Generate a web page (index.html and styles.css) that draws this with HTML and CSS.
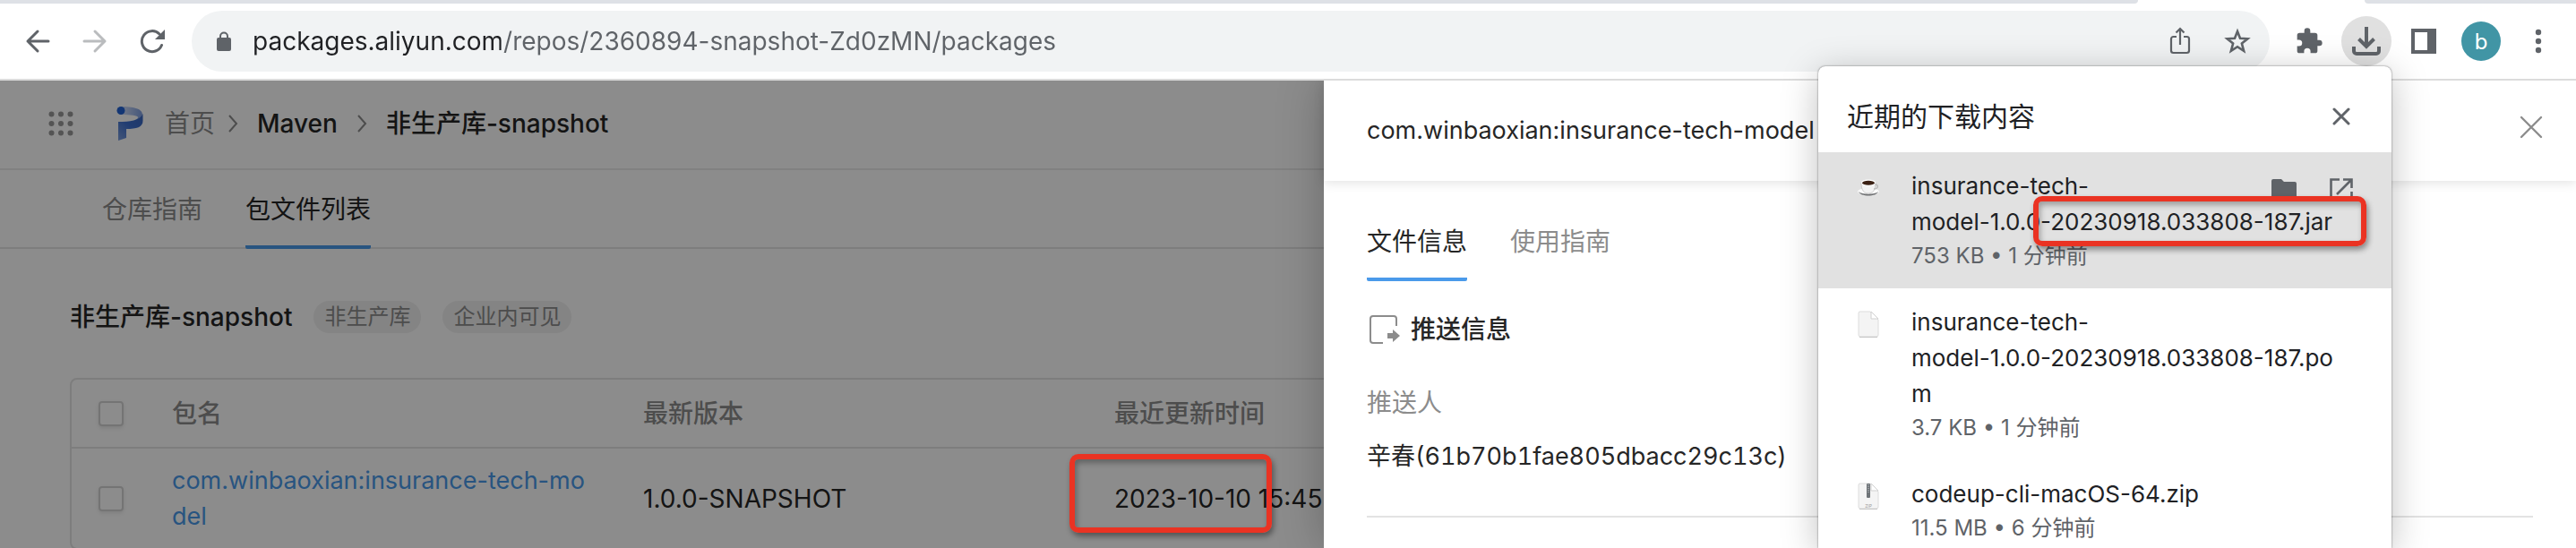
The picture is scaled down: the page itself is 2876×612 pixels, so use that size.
FILE: index.html
```html
<!DOCTYPE html>
<html lang="zh-CN">

<head>
    <meta charset="utf-8">
    <title>非生产库-snapshot</title>
    <meta name="viewport" content="width=device-width,initial-scale=1">
    <link rel="stylesheet" href="styles.css">
</head>

<body>
    <div class="tabstrip">
        <div class="tabstrip-left"></div>
        <div class="tabstrip-right"></div>
    </div>

    <div class="toolbar">
        <button class="tool" aria-label="back">
            <svg width="28" height="28" viewBox="0 0 28 28"><path d="M14 3L3 14l11 11M3 14h23" fill="none" stroke="#5f6368" stroke-width="3" stroke-linecap="round" stroke-linejoin="round"/></svg>
        </button>
        <button class="tool" aria-label="forward" disabled>
            <svg width="28" height="28" viewBox="0 0 28 28"><path d="M14 3l11 11-11 11M25 14H2" fill="none" stroke="#babcbe" stroke-width="3" stroke-linecap="round" stroke-linejoin="round"/></svg>
        </button>
        <button class="tool" aria-label="reload">
            <svg width="28" height="28" viewBox="0 0 28 28"><path d="M24.500 18.500A11.500 11.500 0 1 1 22 6" fill="none" stroke="#5f6368" stroke-width="3" stroke-linecap="round"/><path d="M28 1v11H17z" fill="#5f6368"/></svg>
        </button>

        <div class="omnibox">
            <svg width="16" height="22" viewBox="0 0 16 22"><path d="M4 9V5.500a4 4 0 0 1 8 0V9" fill="none" stroke="#5f6368" stroke-width="2"/><rect y="7" width="16" height="15" rx="2" fill="#5f6368"/></svg>
            <input class="url" type="text" aria-label="url" value="packages.aliyun.com/repos/2360894-snapshot-Zd0zMN/packages">
            <button class="tool" aria-label="share">
                <svg width="24" height="32" viewBox="0 0 24 32"><path d="M8 11H4.500A2.500 2.500 0 0 0 2 13.500v13A2.500 2.500 0 0 0 4.500 29h15a2.500 2.500 0 0 0 2.500-2.500v-13a2.500 2.500 0 0 0-2.500-2.500H16M12 20V2M7.500 6.500L12 2l4.500 4.500" fill="none" stroke="#5f6368" stroke-width="2.200"/></svg>
            </button>
            <button class="tool" aria-label="bookmark">
                <svg width="30" height="30" viewBox="0 0 30 30"><path d="M15 4l3 7.800 8.400.500-6.500 5.300 2.200 8.200L15 21.200l-7.100 4.600 2.200-8.200-6.500-5.300 8.400-.500z" fill="none" stroke="#5f6368" stroke-width="2.600"/></svg>
            </button>
        </div>

        <button class="tool" aria-label="extensions">
            <svg width="32" height="32" viewBox="0 0 24 24"><path d="M20.500 11H19V7a2 2 0 0 0-2-2h-4V3.500a2.500 2.500 0 0 0-5 0V5H4a2 2 0 0 0-2 2v3.800h1.500a2.700 2.700 0 0 1 0 5.400H2V20a2 2 0 0 0 2 2h3.800v-1.500a2.700 2.700 0 0 1 5.400 0V22H17a2 2 0 0 0 2-2v-4h1.500a2.500 2.500 0 0 0 0-5z" fill="#5f6368"/></svg>
        </button>
        <button class="tool tool-active" aria-label="downloads">
            <svg width="32" height="32" viewBox="0 0 32 32"><path d="M16 0v22M7.500 13.500L16 22l8.500-8.500" fill="none" stroke="#5f6368" stroke-width="4"/><path d="M2 22v5a3 3 0 0 0 3 3h22a3 3 0 0 0 3-3v-5" fill="none" stroke="#5f6368" stroke-width="4"/></svg>
        </button>
        <button class="tool" aria-label="side panel">
            <svg width="28" height="28" viewBox="0 0 28 28"><path d="M0 0h28v28H0zM4 4v20h14V4z" fill="#5f6368" fill-rule="evenodd"/></svg>
        </button>
        <button class="avatar">b</button>
        <button class="tool" aria-label="menu">
            <svg width="8" height="28" viewBox="0 0 8 28" fill="#5f6368"><circle cx="4" cy="4" r="3.200"/><circle cx="4" cy="14" r="3.200"/><circle cx="4" cy="24" r="3.200"/></svg>
        </button>
    </div>

    <div class="viewport">
        <div class="page">
            <header class="page-header">
                <svg class="apps" width="28" height="28" viewBox="0 0 28 28" fill="#999"><circle cx="3.500" cy="3.500" r="3"/><circle cx="14" cy="3.500" r="3"/><circle cx="24.500" cy="3.500" r="3"/><circle cx="3.500" cy="14" r="3"/><circle cx="14" cy="14" r="3"/><circle cx="24.500" cy="14" r="3"/><circle cx="3.500" cy="24.500" r="3"/><circle cx="14" cy="24.500" r="3"/><circle cx="24.500" cy="24.500" r="3"/></svg>
                <svg class="logo" width="30" height="38" viewBox="0 0 30 38">
                    <defs>
                        <linearGradient id="g1" x1="0" x2="1"><stop offset="0" stop-color="#d6e0f7"/><stop offset="1" stop-color="#7c9de0"/></linearGradient>
                        <linearGradient id="g2" x1="1" y1="0" x2="0" y2="1"><stop offset="0" stop-color="#3a66bd"/><stop offset=".500" stop-color="#3c6fcf"/><stop offset="1" stop-color="#7c9ddc"/></linearGradient>
                    </defs>
                    <path d="M5 0c13 0 24 2 24 9-1 4-5 6-12 8 5-2 7-3.500 7-5 0-2-8-3-19-3z" fill="url(#g1)"/>
                    <path d="M2 17c13 0 24-1 27.500-9v8c0 7-7 9-18.500 9v10l-9 3z" fill="url(#g2)"/>
                    <circle cx="5" cy="4.500" r="4.500" fill="#2463d4"/>
                </svg>
                <nav class="crumbs">
                    <a class="muted" href="#">首页</a>
                    <svg width="12" height="20" viewBox="0 0 12 20"><path d="M2 1l8 9-8 9" fill="none" stroke="#8c8c8c" stroke-width="2"/></svg>
                    <a href="#">Maven</a>
                    <svg width="12" height="20" viewBox="0 0 12 20"><path d="M2 1l8 9-8 9" fill="none" stroke="#8c8c8c" stroke-width="2"/></svg>
                    <a class="current" href="#">非生产库-snapshot</a>
                </nav>
            </header>

            <nav class="tabs page-tabs">
                <a href="#">仓库指南</a>
                <a class="active" href="#">包文件列表</a>
            </nav>

            <main class="content">
                <div class="repo-title">
                    <h1>非生产库-snapshot</h1>
                    <span class="badge">非生产库</span>
                    <span class="badge">企业内可见</span>
                </div>
                <div class="table-box">
                    <table>
                        <colgroup><col class="col-check"><col class="col-name"><col class="col-version"><col></colgroup>
                        <thead>
                            <tr>
                                <th><input type="checkbox" aria-label="全选"></th>
                                <th>包名</th>
                                <th>最新版本</th>
                                <th>最近更新时间</th>
                            </tr>
                        </thead>
                        <tbody>
                            <tr>
                                <td><input type="checkbox" aria-label="选择"></td>
                                <td class="name"><a href="#">com.winbaoxian:insurance-tech-model</a></td>
                                <td>1.0.0-SNAPSHOT</td>
                                <td>2023-10-10 15:45</td>
                            </tr>
                        </tbody>
                    </table>
                </div>
            </main>
        </div>

        <div class="mask"></div>
        <div class="mark mark-date"></div>

        <aside class="drawer">
            <div class="drawer-header">
                <h2>com.winbaoxian:insurance-tech-model</h2>
                <button class="plain" aria-label="关闭">
                    <svg width="26" height="26" viewBox="0 0 26 26"><path d="M2 2l22 22M24 2L2 24" stroke="#8c8c8c" stroke-width="2.400" stroke-linecap="round"/></svg>
                </button>
            </div>
            <div class="drawer-body">
                <nav class="tabs">
                    <a class="active" href="#">文件信息</a>
                    <a href="#">使用指南</a>
                </nav>
                <section class="push">
                    <h3>
                        <svg width="34" height="32" viewBox="0 0 34 32"><path d="M30 12V4a3 3 0 0 0-3-3H4a3 3 0 0 0-3 3v24a3 3 0 0 0 3 3h11" fill="none" stroke="#8c8c8c" stroke-width="2"/><path d="M20 20h6v-4l8 7-8 7v-4h-6z" fill="#8c8c8c"/></svg>
                        推送信息
                    </h3>
                    <dl>
                        <dt>推送人</dt>
                        <dd>辛春(61b70b1fae805dbacc29c13c)</dd>
                    </dl>
                </section>
            </div>
        </aside>
    </div>

    <div class="downloads">
        <div class="downloads-header">
            <h2>近期的下载内容</h2>
            <button class="plain" aria-label="关闭">
                <svg width="20" height="20" viewBox="0 0 20 20"><path d="M2 2l16 16M18 2L2 18" stroke="#5f6368" stroke-width="3" stroke-linecap="round"/></svg>
            </button>
        </div>
        <ul>
            <li class="hover">
                <svg class="file-icon" width="24" height="28" viewBox="0 0 24 28">
                    <ellipse cx="12" cy="19" rx="12" ry="4" fill="#fafafa"/>
                    <path d="M1 19c2 6 20 6 22 0-3 3.500-19 3.500-22 0z" fill="#6f7173"/>
                    <path d="M4 9h16c0 5-1 12-8 12S4 14 4 9z" fill="#f2f2f2" stroke="#b5b5b5" stroke-width=".600"/>
                    <path d="M19.500 11c4 0 4 5-1.500 5" fill="none" stroke="#bbb" stroke-width="1.500"/>
                    <ellipse cx="12" cy="9" rx="8" ry="3.400" fill="#fff"/>
                    <ellipse cx="12" cy="9.200" rx="6.800" ry="2.500" fill="#3b2114"/>
                </svg>
                <div class="file-text">
                    <p class="file-name">insurance-tech-<br>model-1.0.0-20230918.033808-187.jar</p>
                    <p class="file-meta">753 KB • 1 分钟前</p>
                </div>
                <div class="file-actions">
                    <button class="plain" aria-label="在文件夹中显示">
                        <svg width="28" height="24" viewBox="0 0 28 24"><path d="M2 0h9l3 3h12a2 2 0 0 1 2 2v17a2 2 0 0 1-2 2H2a2 2 0 0 1-2-2V2a2 2 0 0 1 2-2z" fill="#5f6368"/></svg>
                    </button>
                    <button class="plain" aria-label="打开">
                        <svg width="26" height="26" viewBox="0 0 26 26"><path d="M11 1.500H1.500v23h23V15M15 1.500h9.500V11M24.500 1.500L8 18" fill="none" stroke="#5f6368" stroke-width="2.600"/></svg>
                    </button>
                </div>
                <div class="mark mark-file"></div>
            </li>
            <li>
                <svg class="file-icon" width="24" height="30" viewBox="0 0 24 30"><path d="M2 1h12l9 9v17a2 2 0 0 1-2 2H3a2 2 0 0 1-2-2V2z" fill="#f4f4f4" stroke="#dcdcdc"/><path d="M15 1v8h8z" fill="#fff" stroke="#d0d0d0"/><path d="M2 29.500h20" stroke="#c4c4c4"/></svg>
                <div class="file-text">
                    <p class="file-name">insurance-tech-<br>model-1.0.0-20230918.033808-187.pom</p>
                    <p class="file-meta">3.7 KB • 1 分钟前</p>
                </div>
            </li>
            <li>
                <svg class="file-icon" width="24" height="30" viewBox="0 0 24 30"><path d="M2 1h12l9 9v17a2 2 0 0 1-2 2H3a2 2 0 0 1-2-2V2z" fill="#f4f4f4" stroke="#dcdcdc"/><path d="M15 1v8h8z" fill="#fff" stroke="#d0d0d0"/><path d="M2 29.500h20" stroke="#c4c4c4"/><rect x="10" y="1" width="4" height="16" rx="1" fill="#6f7478"/><path d="M12 2v9" stroke="#c8ccd0" stroke-dasharray="1 1"/><text x="12" y="28" font-size="5" text-anchor="middle" fill="#999">ZIP</text></svg>
                <div class="file-text">
                    <p class="file-name">codeup-cli-macOS-64.zip</p>
                    <p class="file-meta">11.5 MB • 6 分钟前</p>
                </div>
            </li>
        </ul>
    </div>
</body>

</html>
```
FILE: styles.css
```css
* {
    box-sizing: border-box;
}
html, body {
    height: 100%;
    margin: 0;
}
body {
    position: relative;
    display: flex;
    flex-direction: column;
    overflow: hidden;
    background: #fff;
    color: #262626;
    font-family: Inter, "Noto Sans CJK SC", sans-serif;
    font-size: 28px;
    line-height: 40px;
}
h1, h2, h3, p, ul, dl, dd {
    margin: 0;
    padding: 0;
    font-size: 28px;
    font-weight: 400;
}
ul {
    list-style: none;
}
a {
    color: inherit;
    text-decoration: none;
}
button {
    padding: 0;
    border: 0;
    background: none;
    font-family: inherit;
}
svg {
    display: block;
    flex: none;
}

/* browser chrome */
.tabstrip {
    display: flex;
    justify-content: space-between;
    flex: none;
    height: 4px;
}
.tabstrip-left, .tabstrip-right {
    background: #dee1e6;
}
.tabstrip-left {
    width: 83%;
    border-bottom-right-radius: 12px;
}
.tabstrip-right {
    width: 236px;
    border-bottom-left-radius: 12px;
}
.toolbar {
    display: flex;
    align-items: center;
    flex: none;
    gap: 16px;
    height: 86px;
    padding: 0 22px;
    border-bottom: 2px solid #dcdcdc;
}
.tool {
    display: flex;
    align-items: center;
    justify-content: center;
    width: 40px;
    height: 56px;
}
.tool + .tool {
    margin-left: 8px;
}
.tool-active {
    width: 56px;
    border-radius: 50%;
    background: #e0e0e0;
}
.tool.tool-active, .tool-active + .tool {
    margin-left: 0;
}
.omnibox {
    display: flex;
    align-items: center;
    flex: 1;
    height: 68px;
    margin: 0 8px;
    padding: 0 16px 0 28px;
    border-radius: 34px;
    background: #f1f3f4;
}
.url {
    flex: 1;
    height: 56px;
    margin-left: 24px;
    padding: 0;
    border: 0;
    color: #5f6368;
    font: inherit;
    /* host is darker than the path */
    background: linear-gradient(to right, #202124 277px, #5f6368 277px);
    -webkit-background-clip: text;
    background-clip: text;
    -webkit-text-fill-color: transparent;
}
.omnibox .tool + .tool {
    margin-left: 24px;
}
.avatar {
    width: 44px;
    height: 44px;
    margin: 0 6px;
    border-radius: 50%;
    background: #4195a5;
    color: #fff;
    font-size: 24px;
}

/* page under the mask */
.viewport {
    position: relative;
    flex: 1;
    min-height: 0;
    overflow: hidden;
}
.page-header {
    display: flex;
    align-items: center;
    height: 100px;
    padding: 0 54px 2px;
    border-bottom: 2px solid #ebebeb;
}
.logo {
    margin-left: 48px;
}
.crumbs {
    display: flex;
    align-items: center;
    margin-left: 24px;
    font-weight: 500;
}
.crumbs svg {
    margin: 0 21px;
}
.crumbs .muted {
    color: #8c8c8c;
    font-weight: 400;
}
.crumbs .muted + svg {
    margin-left: 14px;
}
.tabs {
    display: flex;
    gap: 48px;
    color: #8c8c8c;
}
.tabs a {
    padding: 24px 0 20px;
    border-bottom: 4px solid transparent;
}
.tabs .active {
    border-color: #4a9aea;
    border-radius: 2px;
    color: #262626;
}
.page-tabs {
    padding: 0 114px;
    box-shadow: inset 0 -2px #e3e3e3;
}
.content {
    padding: 56px 78px 0;
}
.repo-title {
    display: flex;
    align-items: center;
    gap: 24px;
}
.repo-title h1 {
    font-weight: 500;
}
.badge {
    padding: 0 12px;
    border-radius: 18px;
    background: #f0f0f0;
    color: #8c8c8c;
    font-size: 24px;
    line-height: 36px;
}
.table-box {
    margin-top: 48px;
    border: 2px solid #e3e3e3;
    border-radius: 8px;
}
table {
    width: 100%;
    border-collapse: collapse;
    table-layout: fixed;
}
.col-check {
    width: 112px;
}
.col-name, .col-version {
    width: 526px;
}
th, td {
    padding: 0 60px 0 0;
    text-align: left;
}
th {
    height: 76px;
    border-bottom: 2px solid #e3e3e3;
    color: #8c8c8c;
    font-weight: 500;
}
td {
    height: 112px;
}
.name {
    color: #4a9aea;
    font-size: 27px;
    word-break: break-all;
}
input[type="checkbox"] {
    display: block;
    width: 28px;
    height: 28px;
    margin: 0 0 0 30px;
    border: 2px solid #d4d4d4;
    border-radius: 4px;
    background: #fff;
    box-shadow: 0 2px 4px rgba(0, 0, 0, .1);
    appearance: none;
}
.mask {
    position: absolute;
    inset: 0;
    background: rgba(0, 0, 0, .45);
}

/* drawer */
.drawer {
    position: absolute;
    top: 0;
    right: 0;
    bottom: 0;
    width: 1398px;
    background: #fff;
    box-shadow: 0 0 48px rgba(0, 0, 0, .25);
}
.drawer-header {
    display: flex;
    align-items: center;
    justify-content: space-between;
    height: 112px;
    padding: 0 36px 0 48px;
    box-shadow: 0 2px 12px rgba(0, 0, 0, .12);
}
.drawer-header h2 {
    font-size: 27px;
}
.plain {
    display: flex;
    align-items: center;
    justify-content: center;
    width: 28px;
    height: 28px;
}
.drawer-header .plain {
    margin-bottom: 8px;
}
.drawer-body {
    padding: 24px 48px 0;
}
.push {
    padding: 34px 0 46px;
    border-bottom: 2px solid #e3e3e3;
}
.push h3 {
    display: flex;
    align-items: center;
    gap: 12px;
    padding-left: 3px;
    font-weight: 500;
}
.push dl {
    margin-top: 42px;
}
.push dt {
    color: #8c8c8c;
}
.push dd {
    margin-top: 20px;
    font-size: 27px;
    font-variant-numeric: tabular-nums;
}

/* downloads bubble */
.downloads {
    position: absolute;
    top: 74px;
    right: 206px;
    bottom: 0;
    width: 640px;
    border-radius: 8px 8px 0 0;
    background: #fff;
    color: #202124;
    box-shadow: 0 0 2px rgba(0, 0, 0, .6), 0 8px 40px rgba(0, 0, 0, .25);
    overflow: hidden;
}
.downloads-header {
    display: flex;
    align-items: center;
    justify-content: space-between;
    height: 96px;
    padding: 16px 42px 0 32px;
}
.downloads-header h2 {
    font-size: 30px;
}
.downloads li {
    position: relative;
    display: flex;
    padding: 18px 44px 18px 44px;
}
.downloads .hover {
    background: #e1e1e1;
}
.file-icon {
    margin: 7px 36px 0 0;
}
.file-text {
    flex: 1;
}
.file-name {
    font-size: 26px;
    word-break: break-all;
}
.file-meta {
    color: #5f6368;
    font-size: 24px;
    line-height: 36px;
}
.file-actions {
    position: absolute;
    top: 28px;
    right: 42px;
    display: flex;
    gap: 36px;
}

/* red outlines */
.mark {
    position: absolute;
    border: 6px solid #ea3323;
    border-radius: 10px;
    box-shadow: 2px 4px 6px rgba(0, 0, 0, .4), inset 2px 4px 6px rgba(0, 0, 0, .3);
}
.mark-date {
    top: 417px;
    left: 1194px;
    width: 226px;
    height: 88px;
}
.mark-file {
    top: 49px;
    right: 28px;
    width: 372px;
    height: 56px;
}
```
